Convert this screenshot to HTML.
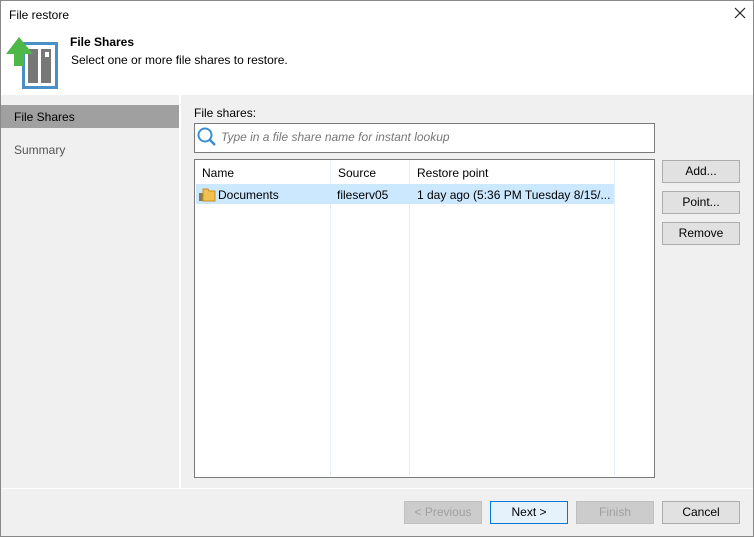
<!DOCTYPE html>
<html><head><meta charset="utf-8"><style>
*{box-sizing:border-box;margin:0;padding:0}
body{width:754px;height:537px;overflow:hidden;font-family:"Liberation Sans","Segoe UI",sans-serif;font-size:12px;color:#000;background:#fff;position:relative}
.abs{position:absolute}
.btn{position:absolute;height:23px;background:#e1e1e1;border:1px solid #adadad;text-align:center;line-height:21px;font-size:12px}
.dis{background:#ccc;border-color:#bfbfbf;color:#a0a0a0}
</style></head><body>
<div class="abs" style="left:9px;top:8px">File restore</div>
<svg class="abs" style="left:734px;top:7px" width="12" height="12"><path d="M1 1L11 11M11 1L1 11" stroke="#222" stroke-width="1.2"/></svg>
<svg class="abs" style="left:4px;top:34px" width="56" height="56">
<rect x="19.5" y="9.5" width="33" height="44" fill="none" stroke="#4a90c8" stroke-width="3"/>
<rect x="24" y="15" width="10" height="34" fill="#777"/>
<rect x="37" y="15" width="10" height="34" fill="#777"/>
<rect x="41" y="18" width="4" height="5" fill="#fff"/>
<polygon points="15,3 2,20 10,20 10,32 20,32 20,20 29,20" fill="#4db848"/>
</svg>
<div class="abs" style="left:70px;top:35px;font-weight:bold">File Shares</div>
<div class="abs" style="left:71px;top:53px">Select one or more file shares to restore.</div>
<div class="abs" style="left:0;top:95px;width:754px;height:442px;background:#f0f0f0"></div>
<div class="abs" style="left:179px;top:95px;width:2px;height:394px;background:#fff"></div>
<div class="abs" style="left:0;top:105px;width:179px;height:23px;background:#a0a0a0"></div>
<div class="abs" style="left:14px;top:110px">File Shares</div>
<div class="abs" style="left:14px;top:143px;color:#555">Summary</div>
<div class="abs" style="left:194px;top:106px">File shares:</div>
<div class="abs" style="left:194px;top:123px;width:461px;height:30px;background:#fff;border:1px solid #7a7a7a"></div>
<svg class="abs" style="left:196px;top:126px" width="22" height="22"><circle cx="9" cy="9" r="6.5" fill="none" stroke="#3c8fd0" stroke-width="2"/><line x1="13.5" y1="13.5" x2="19" y2="19" stroke="#3c8fd0" stroke-width="2.5"/></svg>
<div class="abs" style="left:221px;top:130px;font-style:italic;color:#777">Type in a file share name for instant lookup</div>
<div class="abs" style="left:194px;top:159px;width:461px;height:319px;background:#fff;border:1px solid #7a7a7a"></div>
<div class="abs" style="left:330px;top:161px;width:1px;height:315px;background:#e3eef8"></div>
<div class="abs" style="left:409px;top:161px;width:1px;height:315px;background:#e3eef8"></div>
<div class="abs" style="left:614px;top:161px;width:1px;height:315px;background:#e3eef8"></div>
<div class="abs" style="left:202px;top:166px">Name</div>
<div class="abs" style="left:338px;top:166px">Source</div>
<div class="abs" style="left:417px;top:166px">Restore point</div>
<div class="abs" style="left:196px;top:184px;width:418px;height:20px;background:#cce8ff"></div>
<svg class="abs" style="left:199px;top:186px" width="18" height="16"><rect x="0" y="7" width="4" height="8" fill="#8a7a50"/><path d="M4 3h5l1 2h6v10H4z" fill="#f0c050" stroke="#c89020"/></svg>
<div class="abs" style="left:218px;top:188px">Documents</div>
<div class="abs" style="left:337px;top:188px">fileserv05</div>
<div class="abs" style="left:417px;top:188px">1 day ago (5:36 PM Tuesday 8/15/...</div>
<div class="btn" style="left:662px;top:160px;width:78px">Add...</div>
<div class="btn" style="left:662px;top:191px;width:78px">Point...</div>
<div class="btn" style="left:662px;top:222px;width:78px">Remove</div>
<div class="abs" style="left:0;top:488px;width:754px;height:1px;background:#fff"></div>
<div class="btn dis" style="left:404px;top:501px;width:78px">&lt; Previous</div>
<div class="btn" style="left:490px;top:501px;width:78px;background:#e5f1fb;border-color:#0078d7">Next &gt;</div>
<div class="btn dis" style="left:576px;top:501px;width:78px">Finish</div>
<div class="btn" style="left:662px;top:501px;width:78px">Cancel</div>
<div class="abs" style="left:0;top:0;width:754px;height:537px;border:1px solid #888"></div>
</body></html>
